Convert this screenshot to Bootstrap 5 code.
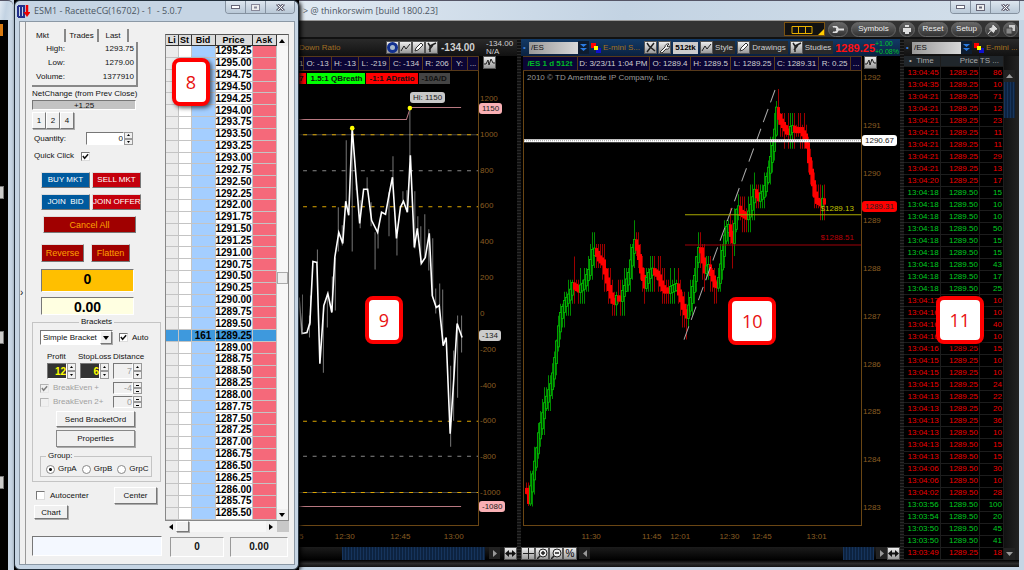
<!DOCTYPE html>
<html lang="en">
<head>
<meta charset="utf-8">
<meta name="viewport" content="width=device-width, initial-scale=1">
<title>thinkorswim [build 1800.23]</title>
<link href="https://cdn.jsdelivr.net/npm/bootstrap@5.3.0/dist/css/bootstrap.min.css" rel="stylesheet">
<style>
:root{--brown:#8a5e22;--rule:#6a4614;--glass:#c6d5e4}
body{background:#000;font:8px/12px "Liberation Sans",Arial,sans-serif;color:#d0d0d0;overflow-x:hidden}
button,input,select{font:inherit;color:inherit;border-radius:0;padding:0;margin:0}
.desk{min-height:100vh}
.caption{height:20px;font:9px/20px "Open Sans","Noto Sans",sans-serif;color:#4b5562;background:linear-gradient(100deg,#e0e9f2,#c3d3e3 45%,#d3dfea);white-space:nowrap;border-top:1px solid #556}
.sysbtns{height:13px;border:1px solid #8592a0;border-top:0;border-radius:0 0 4px 4px;overflow:hidden}
.sysbtns button{width:20px;border:0;border-right:1px solid #8592a0;background:linear-gradient(#dde6ef,#b9c8d7);display:flex;align-items:center;justify-content:center}
.sysbtns button:last-child{width:28px;border:0}
/* window that peeks out at the left edge */
.peek{flex:0 0 14px;background:#000;border-right:6px solid var(--glass)}
.peek .caption{margin-right:-5px;border-radius:0 5px 0 0}
.peekbtn{width:3px;height:12px;background:#d97a10}
.tab-mark{height:13px;width:4px;background:#ccc;border:1px solid #777;border-left:0}
.tab-mark.gap-top{margin-top:150px}
.tab-mark.gap-next{margin-top:132px}
/* order window */
.orderwin{flex:0 0 285px;position:relative;z-index:2;background:var(--glass);border:1px solid #23303c;border-radius:6px;padding:0 3px 4px 4px;margin-bottom:2px;box-shadow:2px 1px 4px #000}
.orderwin .caption{background:none;border:0;margin-left:-2px}
.client{background:#f0f0f0;border:1px solid #8b98a5;color:#111;min-height:544px}
.grip{flex:0 0 6px;border-right:1px solid #999;font-size:10px;line-height:8px}
.form-side{flex:0 0 139px;padding:7px 3px 0 6px;white-space:nowrap}
.raised{background:#f0f0f0;border:1px solid #fff;border-right-color:#777;border-bottom-color:#777;box-shadow:1px 1px 0 #aaa;line-height:11px;text-align:center}
.sunk{border:1px solid #777;border-right-color:#fff;border-bottom-color:#fff;background:#fff}
.mtab{height:13px;border:0;border-right:2px solid #888;background:none;line-height:13px}
.facts{width:106px;height:45px;border-right:2px solid #888;border-bottom:2px solid #888}
.facts th{font-weight:400;text-align:right;width:33px}
.facts td,.facts th{line-height:14px;padding:0}
.facts td{text-align:right;padding-right:2px}
.trade{width:49px;height:16px;color:#fff;border:1px solid #ddd;border-right-color:#777;border-bottom-color:#777;line-height:14px;text-align:center;white-space:nowrap}
.buy{background:#005a9e}.sell{background:#c4000c}
.dk{background:#a00000;color:#ffa000;height:18px;font-size:9px}
.wide{width:93px;height:17px}
.readout{width:93px;font:bold 14px/19px "Liberation Sans",sans-serif;color:#000;text-align:center}
.readout.gold{height:23px;background:#ffbf00}
.readout.cream{height:18px;line-height:18px;background:#ffffe1}
.spin{width:9px}
.spin button{flex:1;border:1px solid #999;background:#f0f0f0;display:flex;align-items:center;justify-content:center}
.box{border:1px solid #c4c4c4;padding:0;margin:0;min-width:0}
.box legend{float:none;width:auto;font-size:8px;line-height:12px;margin:0;padding:0 2px}
.tick{appearance:none;width:9px;height:9px;background:#fff;border:1px solid #777;border-right-color:#ddd;border-bottom-color:#ddd;flex:none}
.tick:checked{background:#fff url("data:image/svg+xml,%3Csvg xmlns='http://www.w3.org/2000/svg' viewBox='0 0 8 8'%3E%3Cpath d='M1 3.5L3 6L7 1.5' fill='none' stroke='%23111' stroke-width='1.7'/%3E%3C/svg%3E")}
.tick:disabled{background-color:#f0f0f0;opacity:.5}
.dot{appearance:none;width:9px;height:9px;border-radius:50%;border:1px solid #888;background:#fff;flex:none}
.dot:checked{background:radial-gradient(circle,#111 0 1px,#fff 2px)}
.off{color:#a0a0a0}
.num{height:16px;width:20px;text-align:right;font-size:9px}
.num.low{height:12px}
.num.hot{background:#333;color:#ff0;font:bold 10px/14px "Liberation Sans",sans-serif}
.simple{appearance:none;width:73px;height:15px;padding-left:2px;line-height:12px}
.droparrow{position:absolute;right:1px;top:1px;width:12px;height:13px;pointer-events:none;display:flex;align-items:center;justify-content:center}
.ladder-side{flex:0 0 123px;padding:12px 0 0}
.ladder{height:487px;border:1px solid #888;border-top-color:#555}
.ladder table{table-layout:fixed;border-collapse:collapse;width:110px;height:100%;font:bold 10px/11px "Liberation Sans",sans-serif;color:#000}
.ladder th,.ladder td{padding:0;text-align:center;border:1px solid #c4c4c4;border-width:0 1px 1px 0;white-space:nowrap;line-height:10px}
.ladder th{background:#dcdcdc;border-color:#333;font-size:9px}
.ladder td:nth-child(1){background:#ebebeb}.ladder td:nth-child(2){background:#fff}
.ladder td:nth-child(3){background:#a4ceff}.ladder td:nth-child(4){background:#fff}.ladder td:nth-child(5){background:#f5697a}
.ladder tr.inside td{background:#3e99dd}
.sbar{background:#f7f7f7;flex:0 0 11px}
.sbar button,.hbar button{border:0;background:#f0f0f0;width:11px;height:11px;display:flex;align-items:center;justify-content:center}
.vthumb{height:12px;background:#f0f0f0;border:1px solid #aaa}
.hbar{height:11px;background:#f7f7f7}
.total{height:20px;background:#f0f0f0;border:1px solid #999;border-right-color:#fff;border-bottom-color:#fff;font:bold 10px/18px "Liberation Sans",sans-serif;text-align:center}
/* main platform */
.tos{background:#111;border-right:5px solid var(--glass);border-bottom:5px solid var(--glass);min-width:0}
.tos>.caption{margin-right:-5px}
.topbar{height:19px;background:#333;border-top:1px solid #999;border-bottom:2px solid #111}
.pill{border:1px solid #666;border-radius:8px;background:linear-gradient(#666,#333);color:#eee;height:15px;line-height:12px;display:flex;align-items:center;justify-content:center}
.cols{display:grid;grid-template-columns:218fr 4px 379fr 4px 115fr;background:#000}
.seam{background:repeating-linear-gradient(#2a2a2a 0 1px,#111 1px 3px)}
.panelhead{height:17px;background:linear-gradient(#2a2a2a,#111);white-space:nowrap}
.panelhead.blue{background:linear-gradient(#123a66,#0a2140)}
.change{color:#00c82c;font-size:7px;line-height:8px;width:25px}
.chip{width:13px;height:13px;border:1px solid #555;background:linear-gradient(#eee,#999);display:flex;align-items:center;justify-content:center;flex:none}
.chip svg{display:block}
.tool{height:13px;background:#2a2a2a;border:0;line-height:13px;padding:0 1px}
.sym{width:49px;height:12px;border:0;background:linear-gradient(90deg,#999,#d8d8d8);color:#111;font-size:8px;padding-left:2px}
.symdd{width:11px;height:13px;border:0;background:#0d1c30;display:flex;align-items:center;justify-content:center}
.stats{height:15px;background:#0b0535;border:1px solid #57391a;border-width:1px 0;line-height:13px;white-space:nowrap;overflow:hidden}
.stats span{border-right:1px solid #57391a;text-align:center}
.plot{position:relative;border-right:1px solid var(--rule);border-bottom:1px solid var(--rule);min-width:0}
.plot svg.full{position:absolute;inset:0;width:100%;height:100%}
.scale{color:var(--brown);flex:0 0 38px;position:relative;padding-left:1px}
.pricetag{position:absolute;left:0;border-radius:3px;color:#222;padding:0 3px;line-height:11px}
.times{height:21px;color:var(--brown);position:relative;line-height:21px}
.times span{position:absolute;transform:translateX(-50%)}
.times .first{transform:none;left:0}
.scroller{height:13px;background:linear-gradient(#1c1c1c,#000)}
.navy{background:repeating-linear-gradient(90deg,#16345c 0 1px,#0d2340 1px 3px)}
.navbtn{width:11px;height:12px;background:#222;border:0;display:flex;align-items:center;justify-content:center}
.flag{font:bold 8px/11px "Liberation Sans",sans-serif;color:#111;height:11px;padding:0 3px;white-space:nowrap}
.callout{position:absolute;z-index:5;transform:translate(-50%,-50%);width:48px;height:48px;border:4px solid #f00;border-radius:8px;background:#fff;color:#e81010;font:18px/40px "Open Sans",sans-serif;text-align:center;box-shadow:2px 2px 4px #0009}
.callout.slim{width:38px}
.tape{table-layout:fixed;border-collapse:collapse;width:100%;height:100%;color:#ee0000}
.tape td,.tape th{padding:0 1px 0 0;text-align:right;line-height:10px;border:1px solid #1d1d1d;border-width:0 1px 1px 0;overflow:hidden}
.tape th{background:#20262b;color:#aaa;font-weight:400}
.tape tr.up{color:#00cc20}
</style>
</head>
<body>
<div class="desk d-flex">

  <aside class="peek d-flex flex-column">
    <div class="caption"></div>
    <div class="peekbtn mt-1"></div>
    <div class="tab-mark gap-top"></div>
    <div class="tab-mark gap-next"></div>
    <div class="tab-mark gap-next"></div>
  </aside>

  <section class="orderwin d-flex flex-column">
    <div class="caption d-flex align-items-start">
      <svg width="13" height="13" viewBox="0 0 13 13" class="mt-1 me-1 flex-shrink-0"><path d="M1 1v11M4 1v11M7 1v11M1 1h7M1 12h7" stroke="#23308c" stroke-width="2"/><path d="M10 0v9" stroke="#e00" stroke-width="2.5"/><path d="M6.500 7h7l-3.500 5z" fill="#e00"/></svg>
      <span class="flex-fill">ESM1 - RacetteCG(16702) - 1 &nbsp;- 5.0.7</span>
      <div class="sysbtns d-flex">
        <button aria-label="Minimize"><svg width="9" height="4"><rect x=".5" y=".5" width="8" height="3" fill="#fff" stroke="#667"/></svg></button>
        <button aria-label="Maximize"><svg width="9" height="7"><rect x=".5" y=".5" width="8" height="6" fill="#eee" stroke="#889"/><rect x="3" y="2.500" width="3" height="2" fill="#889"/></svg></button>
        <button aria-label="Close"><svg width="9" height="7" viewBox="0 0 9 7"><path d="M1 0l7 7M8 0L1 7" stroke="#667" stroke-width="3"/><path d="M1.500.5l6 6M7.500.5l-6 6" stroke="#fff"/></svg></button>
      </div>
    </div>
    <div class="client d-flex flex-fill position-relative">
      <div class="grip d-flex align-items-center">›</div>
      <form class="form-side" onsubmit="return false">
        <div class="d-flex">
          <button class="mtab text-start ps-1" style="width:34px">Mkt</button><button class="mtab" style="width:33px">Trades</button><button class="mtab" style="width:30px">Last</button>
        </div>
        <div class="facts"><table class="w-100">
          <tr><th>High:</th><td>1293.75</td></tr><tr><th>Low:</th><td>1279.00</td></tr><tr><th>Volume:</th><td>1377910</td></tr>
        </table></div>
        <div style="height:13px;line-height:14px">NetChange (from Prev Close)</div>
        <div class="sunk text-center" style="width:104px;height:10px;line-height:9px;background:#c3c3c3">+1.25</div>
        <div class="d-flex" style="margin-top:2px">
          <button class="raised" style="width:14px;height:17px">1</button><button class="raised" style="width:14px;height:17px">2</button><button class="raised" style="width:14px;height:17px">4</button>
        </div>
        <div class="d-flex align-items-center" style="margin-top:3px;height:13px;padding-left:2px">
          <label for="qty" style="width:52px">Quantity:</label>
          <input id="qty" class="sunk text-end" style="width:38px;height:13px" value="0">
          <div class="spin d-flex flex-column h-100"><button aria-label="More"><svg width="3" height="2"><path d="M0 2h3l-1.500-2z"/></svg></button><button aria-label="Less"><svg width="3" height="2"><path d="M0 0h3l-1.500 2z"/></svg></button></div>
        </div>
        <div class="d-flex align-items-center" style="margin-top:4px;height:14px;padding-left:2px">
          <label for="quick" style="width:47px">Quick Click</label><input type="checkbox" class="tick" id="quick" checked>
        </div>
        <div class="d-flex" style="margin:9px 0 0 9px;gap:2px"><button class="trade buy">BUY MKT</button><button class="trade sell">SELL MKT</button></div>
        <div class="d-flex" style="margin:6px 0 0 9px;gap:2px"><button class="trade buy">JOIN &nbsp;BID</button><button class="trade sell">JOIN OFFER</button></div>
        <button class="trade dk wide d-block" style="margin:6px 0 0 11px">Cancel All</button>
        <div class="d-flex" style="margin:11px 0 0 9px;gap:7px"><button class="trade dk" style="width:43px">Reverse</button><button class="trade dk" style="width:39px">Flatten</button></div>
        <div class="sunk readout gold" style="margin:7px 0 0 9px">0</div>
        <div class="sunk readout cream" style="margin:5px 0 0 9px">0.00</div>
        <fieldset class="box" style="margin-top:1px;width:129px;padding:0 7px 4px">
          <legend class="mx-auto">Brackets</legend>
          <div class="d-flex align-items-center" style="margin-top:2px;gap:6px">
            <div class="position-relative"><select class="sunk simple d-block" aria-label="Bracket type"><option>Simple Bracket</option></select><span class="droparrow raised"><svg width="6" height="4"><path d="M0 0h6l-3 4z"/></svg></span></div>
            <label class="d-flex align-items-center" style="gap:4px"><input type="checkbox" class="tick" checked>Auto</label>
          </div>
          <div class="d-flex" style="margin-top:6px;padding-left:7px"><label for="pf" style="width:31px">Profit</label><label for="sl" style="width:35px">StopLoss</label><label for="ds">Distance</label></div>
          <div class="d-flex" style="padding-left:7px;height:16px">
            <input id="pf" class="sunk num hot" value="12"><div class="spin d-flex flex-column me-1"><button aria-label="Raise profit"><svg width="3" height="2"><path d="M0 2h3l-1.500-2z"/></svg></button><button aria-label="Lower profit"><svg width="3" height="2"><path d="M0 0h3l-1.500 2z"/></svg></button></div>
            <input id="sl" class="sunk num hot" value="6"><div class="spin d-flex flex-column me-1"><button aria-label="Raise stop"><svg width="3" height="2"><path d="M0 2h3l-1.500-2z"/></svg></button><button aria-label="Lower stop"><svg width="3" height="2"><path d="M0 0h3l-1.500 2z"/></svg></button></div>
            <input id="ds" class="sunk num off bg-transparent" value="7" disabled><div class="spin d-flex flex-column"><button aria-label="Raise distance" disabled><svg width="3" height="2"><path d="M0 2h3l-1.500-2z"/></svg></button><button aria-label="Lower distance" disabled><svg width="3" height="2"><path d="M0 0h3l-1.500 2z"/></svg></button></div>
          </div>
          <div class="d-flex align-items-center off" style="margin-top:3px;height:12px">
            <label class="d-flex align-items-center" style="gap:4px;width:73px"><input type="checkbox" class="tick" checked disabled>BreakEven +</label>
            <input class="sunk num low off bg-transparent" value="-4" disabled aria-label="BreakEven offset"><div class="spin d-flex flex-column h-100"><button aria-label="Raise offset" disabled><svg width="3" height="1"><path d="M0 0h3v1H0z"/></svg></button><button aria-label="Lower offset" disabled><svg width="3" height="1"><path d="M0 0h3v1H0z"/></svg></button></div>
          </div>
          <div class="d-flex align-items-center off" style="margin-top:2px;height:12px">
            <label class="d-flex align-items-center" style="gap:4px;width:73px"><input type="checkbox" class="tick" disabled>BreakEven 2+</label>
            <input class="sunk num low off bg-transparent" value="0" disabled aria-label="BreakEven 2 offset"><div class="spin d-flex flex-column h-100"><button aria-label="Raise second offset" disabled><svg width="3" height="1"><path d="M0 0h3v1H0z"/></svg></button><button aria-label="Lower second offset" disabled><svg width="3" height="1"><path d="M0 0h3v1H0z"/></svg></button></div>
          </div>
          <button class="raised d-block" style="margin:3px 0 0 16px;width:79px;height:16px">Send BracketOrd</button>
          <button class="raised d-block" style="margin:3px 0 0 16px;width:79px;height:17px;border-color:#888">Properties</button>
          <fieldset class="box" style="margin-top:3px;padding:0 5px;width:112px">
            <legend class="ms-0">Group:</legend>
            <div class="d-flex align-items-center" style="height:14px;gap:5px">
              <label class="d-flex align-items-center" style="gap:3px"><input type="radio" name="grp" class="dot" checked>GrpA</label>
              <label class="d-flex align-items-center" style="gap:3px"><input type="radio" name="grp" class="dot">GrpB</label>
              <label class="d-flex align-items-center" style="gap:3px"><input type="radio" name="grp" class="dot">GrpC</label>
            </div>
          </fieldset>
        </fieldset>
        <div class="d-flex align-items-center justify-content-between" style="margin-top:5px;padding:0 5px 0 4px">
          <label class="d-flex align-items-center" style="gap:5px"><input type="checkbox" class="tick">Autocenter</label>
          <button class="raised" style="width:43px;height:17px">Center</button>
        </div>
        <button class="raised d-block" style="margin:1px 0 0 2px;width:34px;height:14px">Chart</button>
        <input class="sunk d-block" style="margin-top:17px;width:130px;height:20px;background:#f4f8ff" aria-label="Message">
      </form>
      <div class="ladder-side">
        <div class="ladder d-flex">
          <table>
            <colgroup><col style="width:12px"><col style="width:13px"><col style="width:24px"><col style="width:37px"><col style="width:24px"></colgroup>
            <thead><tr><th>Li</th><th>St</th><th>Bid</th><th>Price</th><th>Ask</th></tr></thead>
            <tbody id="ladder"></tbody>
          </table>
          <div class="sbar d-flex flex-column justify-content-between">
            <button aria-label="Up"><svg width="6" height="4"><path d="M0 4h6l-3-4z"/></svg></button>
            <div class="vthumb"></div>
            <button aria-label="Down"><svg width="6" height="4"><path d="M0 0h6l-3 4z"/></svg></button>
          </div>
        </div>
        <div class="hbar d-flex"><button aria-label="Left"><svg width="4" height="6"><path d="M4 0v6l-4-3z"/></svg></button><div class="raised" style="width:13px"></div><button class="ms-auto" aria-label="Right"><svg width="4" height="6"><path d="M0 0v6l4-3z"/></svg></button><div style="width:12px;background:#c8c8c8"></div></div>
        <div class="d-flex" style="margin:5px 0 0 5px;gap:6px"><div class="total" style="width:54px">0</div><div class="total" style="width:58px">0.00</div></div>
      </div>
      <div class="callout slim" style="left:171px;top:60px">8</div>
    </div>
  </section>

  <main class="tos d-flex flex-column flex-fill">
    <div class="caption d-flex align-items-start">
      <span class="flex-fill ps-1">&gt; @ thinkorswim [build 1800.23]</span>
      <div class="sysbtns d-flex me-1">
        <button aria-label="Minimize"><svg width="9" height="4"><rect x=".5" y=".5" width="8" height="3" fill="#fff" stroke="#667"/></svg></button>
        <button aria-label="Maximize"><svg width="9" height="7"><rect x=".5" y=".5" width="8" height="6" fill="#eee" stroke="#667"/><rect x="3" y="2.500" width="3" height="2" fill="#667"/></svg></button>
        <button aria-label="Close"><svg width="9" height="7" viewBox="0 0 9 7"><path d="M1 0l7 7M8 0L1 7" stroke="#667" stroke-width="3"/><path d="M1.500.5l6 6M7.500.5l-6 6" stroke="#fff"/></svg></button>
      </div>
    </div>
    <div class="topbar d-flex justify-content-end align-items-center" style="gap:3px;padding-right:1px">
      <button class="p-0" aria-label="Layout" style="width:41px;height:14px;background:#111;border:1px solid #7b5210"><svg class="d-block" width="39" height="12"><path d="M7 3.500h20v7H7zM13.500 3v7M20.500 3v7" fill="none" stroke="#e8b000"/><path d="M39 6v6h-6z" fill="#fc0"/></svg></button>
      <button class="pill" style="width:20px" aria-label="Settings"><svg width="12" height="7"><path d="M4 3.500h8" stroke="#ddd" stroke-width="2"/><path d="M1 1a3 3 0 1 1 0 5" fill="none" stroke="#ddd" stroke-width="2"/></svg></button>
      <button class="pill" style="width:45px">Symbols</button>
      <button class="pill" style="width:16px" aria-label="Print"><svg width="10" height="9"><path d="M1 3h8v4H1zM3 0h4v2H3zM3 6h4v3H3z" fill="#ddd"/></svg></button>
      <button class="pill" style="width:30px">Reset</button><button class="pill" style="width:31px">Setup</button>
      <button class="pill" style="width:15px" aria-label="Pin"><svg width="9" height="9"><path d="M5 0l4 4-2 .5-1.500 3L1.500 4l3-1.500zM3 5.500L0 9" fill="#ddd" stroke="#ddd"/></svg></button>
      <button class="pill" style="width:15px" aria-label="Detach"><svg width="9" height="9"><path d="M3 0h6v6H3z" fill="#ccc"/><path d="M0 3h6v6H0z" fill="#888" stroke="#444"/></svg></button>
    </div>
    <div class="cols flex-fill">
      <!-- breadth chart -->
      <section class="d-flex flex-column position-relative overflow-hidden">
        <div class="panelhead d-flex align-items-center">
          <span class="flex-fill" style="color:#a06e24">Down Ratio</span>
          <span class="chip"><svg width="11" height="11"><circle cx="5.500" cy="5.500" r="4" fill="#abc" stroke="#13318f" stroke-width="3"/></svg></span><span class="chip"><svg width="11" height="11"><path d="M1 9l3-5 2 3 4-5" fill="none" stroke="#222"/></svg></span><span class="chip"><svg width="11" height="11"><path d="M2 9l1-3 5-5 2 2-5 5z" fill="#fff" stroke="#333"/></svg></span><span class="chip"><svg width="11" height="11"><path d="M2 1l2 3L10 1M4 4v6M7 3L3 8" fill="none" stroke="#222" stroke-width="1.500"/></svg></span>
          <b style="font-size:10px;width:48px;padding-left:3px">-134.00</b><span style="line-height:8px;width:31px">-134.00<br>N/A</span>
        </div>
        <div class="d-flex">
          <div class="stats d-flex flex-fill"><span style="width:5px">1</span><span style="width:28px">O: -13</span><span style="width:27px">H: -13</span><span style="width:31px">L: -219</span><span style="width:33px">C: -134</span><span style="width:29px">R: 206</span><span style="width:16px">Y:</span><span class="flex-fill">...</span></div>
          <div class="ps-1" style="flex:0 0 38px"><span class="chip"><svg width="11" height="11"><path d="M0 7h2l2-4 1 5 2-6 2 4h2" fill="none" stroke="#222"/></svg></span></div>
        </div>
        <div class="d-flex flex-fill">
          <div class="plot flex-fill">
            <svg class="full" viewBox="299 71 180 453" preserveAspectRatio="none" fill="none">
              <path d="M299 134.500h180M299 491.500h180" stroke="#444"/>
              <path d="M303 134.500h176M303 206.500h176M303 420.500h176M303 491.500h176" stroke="#e0a800" stroke-dasharray="4 5.700"/>
              <path d="M303 170.500h176M303 455.500h176" stroke="#888" stroke-dasharray="4 5.700"/>
              <path d="M299 119.500h108l4-12h51M299 505.500h163" stroke="#b87880"/>
              <path d="M302.500 294v36M309.500 315v22M310.500 295v30M317.500 249v13M323.500 305v67M327.500 293v34M332.500 276v35M335.500 257v53M338.500 207v44M342.500 225v20M346.500 140v65M352.500 128v123M356.500 180v10M360.500 200v28M367.500 177v14M371.500 202v24M375.500 232v37M378.500 230v18M389.500 192v44M393.500 156v24M397.500 235v20M403.500 191v12M407.500 190v22M410.500 108v52M415.500 191v57M418.500 216v14M421.500 226v36M425.500 214v43M429.500 229v41M433.500 238v57M436.500 288v25M440.500 283v24M443.500 289v52M451.500 365v81M454.500 350v70M458.500 315v82M462.500 315v37" stroke="#777"/>
              <polyline points="299,297 302,333 307,332 310,322 313,261 317,262 320,363 324,305 328,293 332,312 335,257 339,232 343,243 346,201 349,215 352.500,128 357,185 360,223 364,189 368,189 372,220 378,232 382,212 386,214 390,192 393,177 397,238 401,207 404,201 408,212 411,155 415,247 418,228 422,263 426,257 430,233 433,295 437,307 440,305 444,345 447,337 451,433 455,373 458,323 463,337" stroke="#fff" stroke-width="1.600"/>
              <circle cx="352.500" cy="128" r="2.300" fill="#ff0"/><circle cx="410.500" cy="108" r="2.300" fill="#ff0"/>
            </svg>
            <div class="d-flex position-relative" style="gap:1px;padding-top:2px"><span class="flag" style="background:#f00;padding-left:0">7</span><span class="flag" style="background:#0f0">1.5:1 QBreath</span><span class="flag" style="background:#f00">-1:1 ADratio</span><span class="flag" style="background:#444">-10A/D</span></div>
            <span class="pricetag" style="left:62%;top:4.600%;background:#c8c8c8">Hi: 1150</span>
          </div>
          <div class="scale d-flex flex-column justify-content-between" style="padding-top:22px;padding-bottom:27px">
            <span>1200</span><span>1000</span><span>800</span><span>600</span><span>400</span><span>200</span><span>0</span><span>-200</span><span>-400</span><span>-600</span><span>-800</span><span>-1000</span>
            <span class="pricetag" style="top:7%;background:#f9b0b4">1150</span><span class="pricetag" style="top:57%;background:#ccc">-134</span><span class="pricetag" style="top:94.500%;background:#f9b0b4">-1080</span>
          </div>
        </div>
        <div class="times"><span class="first">5</span><span style="left:21%">12:30</span><span style="left:46.500%">12:45</span><span style="left:71%">13:00</span></div>
        <div class="scroller d-flex"><div class="navy" style="margin-left:19.500%;flex:1"></div><button class="navbtn ms-1" aria-label="Scroll right"><svg width="4" height="7"><path d="M0 0l4 3.500L0 7z" fill="#999"/></svg></button><button class="chip ms-1" aria-label="Fit"><svg width="11" height="9"><path d="M0 4.500l4-3.500v7zM11 4.500L7 1v7z" fill="#111"/><path d="M3 4.500h5" stroke="#111" stroke-width="2"/></svg></button></div>
        <div class="callout slim" style="left:39%;top:54%">9</div>
      </section>
      <div class="seam"></div>
      <!-- futures chart -->
      <section class="d-flex flex-column position-relative overflow-hidden">
        <div class="panelhead blue d-flex align-items-center">
          <span style="color:#3b80d8;width:8px;padding-left:2px">•</span><input class="sym" value="/ES" aria-label="Symbol"><button class="symdd" aria-label="Pick symbol"><svg width="7" height="8"><path d="M0 0h7L3.500 3zM0 4h7L3.500 7z" fill="#2b7be0"/></svg></button>
          <svg class="flex-shrink-0" style="margin:0 2px" width="10" height="10"><path d="M0 0h5v5H0z" fill="#f00"/><path d="M5 5h5v5H5z" fill="#11c"/><path d="M3 3h4v4H3z" fill="#ff0"/></svg><span style="color:#a97420;width:41px">E-mini S...</span>
          <span class="chip"><svg width="11" height="11"><path d="M2 1l2 3L10 9M9 1L2 10" fill="none" stroke="#222" stroke-width="1.500"/></svg></span><span class="chip" style="margin:0 2px 0 1px"><svg width="11" height="11"><path d="M1 10l5-5a3 3 0 0 1 4-3L8 4l1 1 2-1a3 3 0 0 1-4 3l-4 4z" fill="#eee" stroke="#333"/></svg></span>
          <b class="text-black d-flex justify-content-center" style="background:#ccc;width:25px">512tk</b>
          <button class="chip" style="margin-left:2px" aria-label="Style icon"><svg width="11" height="11"><path d="M1 9l3-5 2 3 4-5" fill="none" stroke="#222"/></svg></button><button class="tool" style="width:22px">Style</button>
          <button class="chip" style="margin-left:2px" aria-label="Drawings icon"><svg width="11" height="11"><path d="M2 9l1-3 5-5 2 2-5 5z" fill="#fff" stroke="#333"/></svg></button><button class="tool" style="width:38px">Drawings</button>
          <button class="chip" style="margin-left:2px" aria-label="Studies icon"><svg width="11" height="11"><path d="M2 1l2 3L10 1M4 4v6M7 3L3 8" fill="none" stroke="#222" stroke-width="1.500"/></svg></button><button class="tool" style="width:30px">Studies</button>
          <b class="ms-auto" style="color:#ff1010;font-size:11px">1289.25</b><span class="change">+1.00<br>+0.08%</span>
        </div>
        <div class="d-flex">
          <div class="stats d-flex flex-fill" style="margin-left:2px"><span class="fw-bold" style="color:#00b828;flex:55">/ES 1 d 512t</span><span style="flex:73">D: 3/23/11 1:04 PM</span><span style="flex:41">O: 1289.4</span><span style="flex:40">H: 1289.5</span><span style="flex:44">L: 1289.25</span><span style="flex:44">C: 1289.31</span><span style="flex:32">R: 0.25</span><span style="flex:10">...</span></div>
          <div style="flex:0 0 38px;padding-left:2px"><span class="chip"><svg width="11" height="11"><path d="M0 7h2l2-4 1 5 2-6 2 4h2" fill="none" stroke="#222"/></svg></span></div>
        </div>
        <div class="d-flex flex-fill">
          <div class="plot flex-fill" style="margin-left:2px;border-left:1px solid var(--rule)">
            <svg class="full" viewBox="524 71 337 453" preserveAspectRatio="none" fill="none">
              <g id="candles"></g>
              <path d="M684 339L775 90" stroke="#aaa" stroke-dasharray="14 7"/>
              <path d="M524 140.500h337" stroke="#fff" stroke-width="3"/><path d="M524 140.500h337" stroke="#999" stroke-dasharray="1 1"/>
              <path d="M685 214.500h176" stroke="#a8a800"/><path d="M685 244.500h176" stroke="#a00008"/>
            </svg>
            <span class="position-relative" style="color:#999;top:1px;padding-left:3px">2010 © TD Ameritrade IP Company, Inc.</span>
            <span class="position-absolute" style="left:88%;top:29%;color:#c0c000">$1289.13</span><span class="position-absolute" style="left:88%;top:35.500%;color:#b80008">$1288.51</span>
          </div>
          <div class="scale d-flex flex-column justify-content-between" style="padding-top:1px;padding-bottom:12px">
            <span>1292</span><span>1291</span><span>1290</span><span>1289</span><span>1288</span><span>1287</span><span>1286</span><span>1285</span><span>1284</span><span>1283</span>
            <span class="pricetag bg-white" style="top:14%">1290.67</span><span class="pricetag" style="top:28.500%;background:#f00">1289.31</span>
          </div>
        </div>
        <div class="times"><span style="left:18.500%">11:30</span><span style="left:34.500%">11:45</span><span style="left:42%">12:01</span><span style="left:55%">12:30</span><span style="left:63.500%">12:45</span><span style="left:78%">13:01</span></div>
        <div class="scroller d-flex">
          <button class="chip" style="width:14px" aria-label="Crosshair"><svg width="11" height="11"><path d="M5.500 0v11M0 5.500h11" stroke="#222"/></svg></button><button class="chip" style="width:14px" aria-label="Zoom in"><svg width="11" height="11"><circle cx="6" cy="5" r="4" fill="#eee" stroke="#222"/><path d="M4 5h4M6 3v4M3 8l-3 3" stroke="#222" stroke-width="1.500"/></svg></button><button class="chip" style="width:14px" aria-label="Zoom out"><svg width="11" height="11"><circle cx="6" cy="5" r="4" fill="#eee" stroke="#222"/><path d="M4 5h4M3 8l-3 3" stroke="#222" stroke-width="1.500"/></svg></button><button class="chip text-black" style="width:14px;font-size:10px">%</button>
          <button class="navbtn" style="margin-left:2px" aria-label="Scroll left"><svg width="4" height="7"><path d="M4 0L0 3.500 4 7z" fill="#999"/></svg></button>
          <div class="navy ms-auto" style="width:8.300%"></div><button class="navbtn" style="margin-left:2px" aria-label="Scroll right"><svg width="4" height="7"><path d="M0 0l4 3.500L0 7z" fill="#999"/></svg></button><button class="chip" aria-label="Fit"><svg width="11" height="9"><path d="M0 4.500l4-3.500v7zM11 4.500L7 1v7z" fill="#111"/><path d="M3 4.500h5" stroke="#111" stroke-width="2"/></svg></button>
        </div>
        <div class="callout" style="left:61%;top:54.200%">10</div>
      </section>
      <div class="seam"></div>
      <!-- time and sales -->
      <section class="d-flex flex-column position-relative overflow-hidden">
        <div class="panelhead d-flex align-items-center">
          <span style="color:#3b80d8;width:8px;padding-left:2px">•</span><input class="sym" value="/ES" aria-label="Tape symbol"><button class="symdd" aria-label="Pick tape symbol"><svg width="7" height="8"><path d="M0 0h7L3.500 3zM0 4h7L3.500 7z" fill="#2b7be0"/></svg></button>
          <svg class="flex-shrink-0" width="10" height="10" style="margin:0 2px"><path d="M0 0h5v5H0z" fill="#f00"/><path d="M5 5h5v5H5z" fill="#11c"/><path d="M3 3h4v4H3z" fill="#ff0"/></svg><span style="color:#a97420">E-mini ...</span>
        </div>
        <div class="d-flex flex-fill">
          <table class="tape flex-fill w-auto">
            <colgroup><col style="width:36px"><col style="width:39px"><col style="width:24px"></colgroup>
            <thead><tr><th class="text-center">• &nbsp;Time</th><th>Price</th><th class="text-start text-nowrap">TS ...</th></tr></thead>
            <tbody id="tape"></tbody>
          </table>
          <div class="d-flex flex-column" style="flex:0 0 15px;background:linear-gradient(90deg,#111,#222);padding-top:14px">
            <button class="navbtn" aria-label="Tape up"><svg width="7" height="4"><path d="M0 4h7L3.500 0z" fill="#999"/></svg></button><div class="navy" style="height:36px;width:11px"></div><button class="navbtn mt-auto" aria-label="Tape down"><svg width="7" height="4"><path d="M0 0h7L3.500 4z" fill="#999"/></svg></button>
          </div>
        </div>
        <div class="callout" style="left:48.500%;top:54%">11</div>
      </section>
    </div>
    <div style="height:7px;background:linear-gradient(#000,#2c2c2c 50%,#111)"></div>
  </main>
</div>

<script src="https://cdn.jsdelivr.net/npm/bootstrap@5.3.0/dist/js/bootstrap.bundle.min.js"></script>
<script>
// Price ladder: forty quarter-point steps, inside bid highlighted
let rows = '';
for (let i = 0; i < 40; i++) {
  const p = (1295.25 - i * 0.25).toFixed(2), inside = p === '1289.25';
  rows += `<tr${inside ? ' class="inside"' : ''}><td></td><td></td><td>${inside ? '161' : ''}</td><td>${p}</td><td></td></tr>`;
}
document.getElementById('ladder').innerHTML = rows;

// Tape: seconds-stamp, price fraction, size, u = uptick
const tape = `04:45 .25 86|04:35 .25 10|04:21 .25 71|04:21 .25 12|04:21 .25 23|04:21 .25 11|04:21 .25 11|04:21 .25 29|04:21 .25 13|04:20 .25 17|04:18 .50 15 u|04:18 .50 10 u|04:18 .50 10 u|04:18 .50 50 u|04:18 .50 15 u|04:18 .50 15 u|04:18 .50 43 u|04:18 .50 17 u|04:18 .50 25 u|04:17 .25 10|04:16 .25 10|04:16 .25 40|04:16 .25 10|04:16 .25 15|04:15 .25 10|04:15 .25 10|04:15 .25 24|04:13 .25 22|04:13 .25 20|04:13 .25 36|04:13 .50 10|04:13 .50 15|04:13 .50 15|04:06 .50 30|04:06 .50 10|04:02 .50 28|03:56 .50 100 u|03:54 .50 20 u|03:50 .50 45 u|03:50 .50 41 u|03:49 .25 18`;
document.getElementById('tape').innerHTML = tape.split('|').map(r => {
  const [t, p, s, u] = r.split(' ');
  return `<tr${u ? ' class="up"' : ''}><td>13:${t}</td><td>1289${p}</td><td>${s}</td></tr>`;
}).join('');

// Candles: x,y path of closes; bars are two units apart, wicks snap to the tick grid
const path = [526,490,528,500,530,488,533,470,536,450,538,435,541,420,544,405,548,392,551,383,554,360,557,335,560,315,564,303,569,295,572,285,578,289,583,285,588,272,592,252,595,250,597,257,602,262,606,280,610,295,613,303,616,298,620,298,624,288,628,275,632,250,634,242,637,250,640,270,644,285,648,275,651,270,657,274,660,283,663,290,668,290,676,286,679,295,683,310,686,315,690,300,694,278,697,250,700,250,704,270,708,267,712,278,715,287,718,280,722,253,725,230,728,227,732,240,737,205,739,212,747,217,750,207,754,192,758,198,763,193,768,170,773,143,776,110,779,120,787,133,791,128,795,130,800,130,805,138,808,160,812,183,815,200,820,203,823,200,826,204];
const closeAt = x => {
  let k = 0;
  while (k < path.length - 4 && path[k + 2] < x) k += 2;
  const f = Math.min(1, Math.max(0, (x - path[k]) / (path[k + 2] - path[k])));
  return path[k + 1] + f * (path[k + 3] - path[k + 1]);
};
const extra = {574:[256], 592:[232], 634:[220], 698:[232], 686:[0,339], 778:[89], 780:[113], 820:[0,220], 822:[185], 716:[0,303], 732:[0,268], 738:[194], 746:[0,232]};
const tick = 11.9, base = 89;
let out = '';
for (let x = 526, n = 0; x <= 825; x += 2, n++) {
  const o = closeAt(x - 2), c = closeAt(x), up = c < o;
  let top = Math.min(o, c) - 3, bot = Math.max(o, c) + 3;
  let hi = base + Math.floor((top - (n * 7 % 5) * 2 - base) / tick) * tick;
  let lo = base + Math.ceil((bot + (n * 11 % 5) * 2 - base) / tick) * tick;
  hi = Math.max(hi, base);
  if (x < 532) lo = Math.min(lo, 505);
  const e = extra[x]; if (e) { if (e[0]) hi = e[0]; if (e[1]) lo = e[1]; }
  out += `<path d="M${x + .5} ${hi.toFixed(1)}V${lo.toFixed(1)}" stroke="${up ? '#008a00' : '#9c0000'}"/>`;
  out += up ? `<rect x="${x - .5}" y="${top.toFixed(1)}" width="2" height="${(bot - top).toFixed(1)}" fill="#003c00" stroke="#00c400" stroke-width=".8"/>`
            : `<rect x="${x - 1}" y="${top.toFixed(1)}" width="3" height="${(bot - top).toFixed(1)}" fill="#ff0000"/>`;
}
document.getElementById('candles').innerHTML = out;
</script>
</body>
</html>
